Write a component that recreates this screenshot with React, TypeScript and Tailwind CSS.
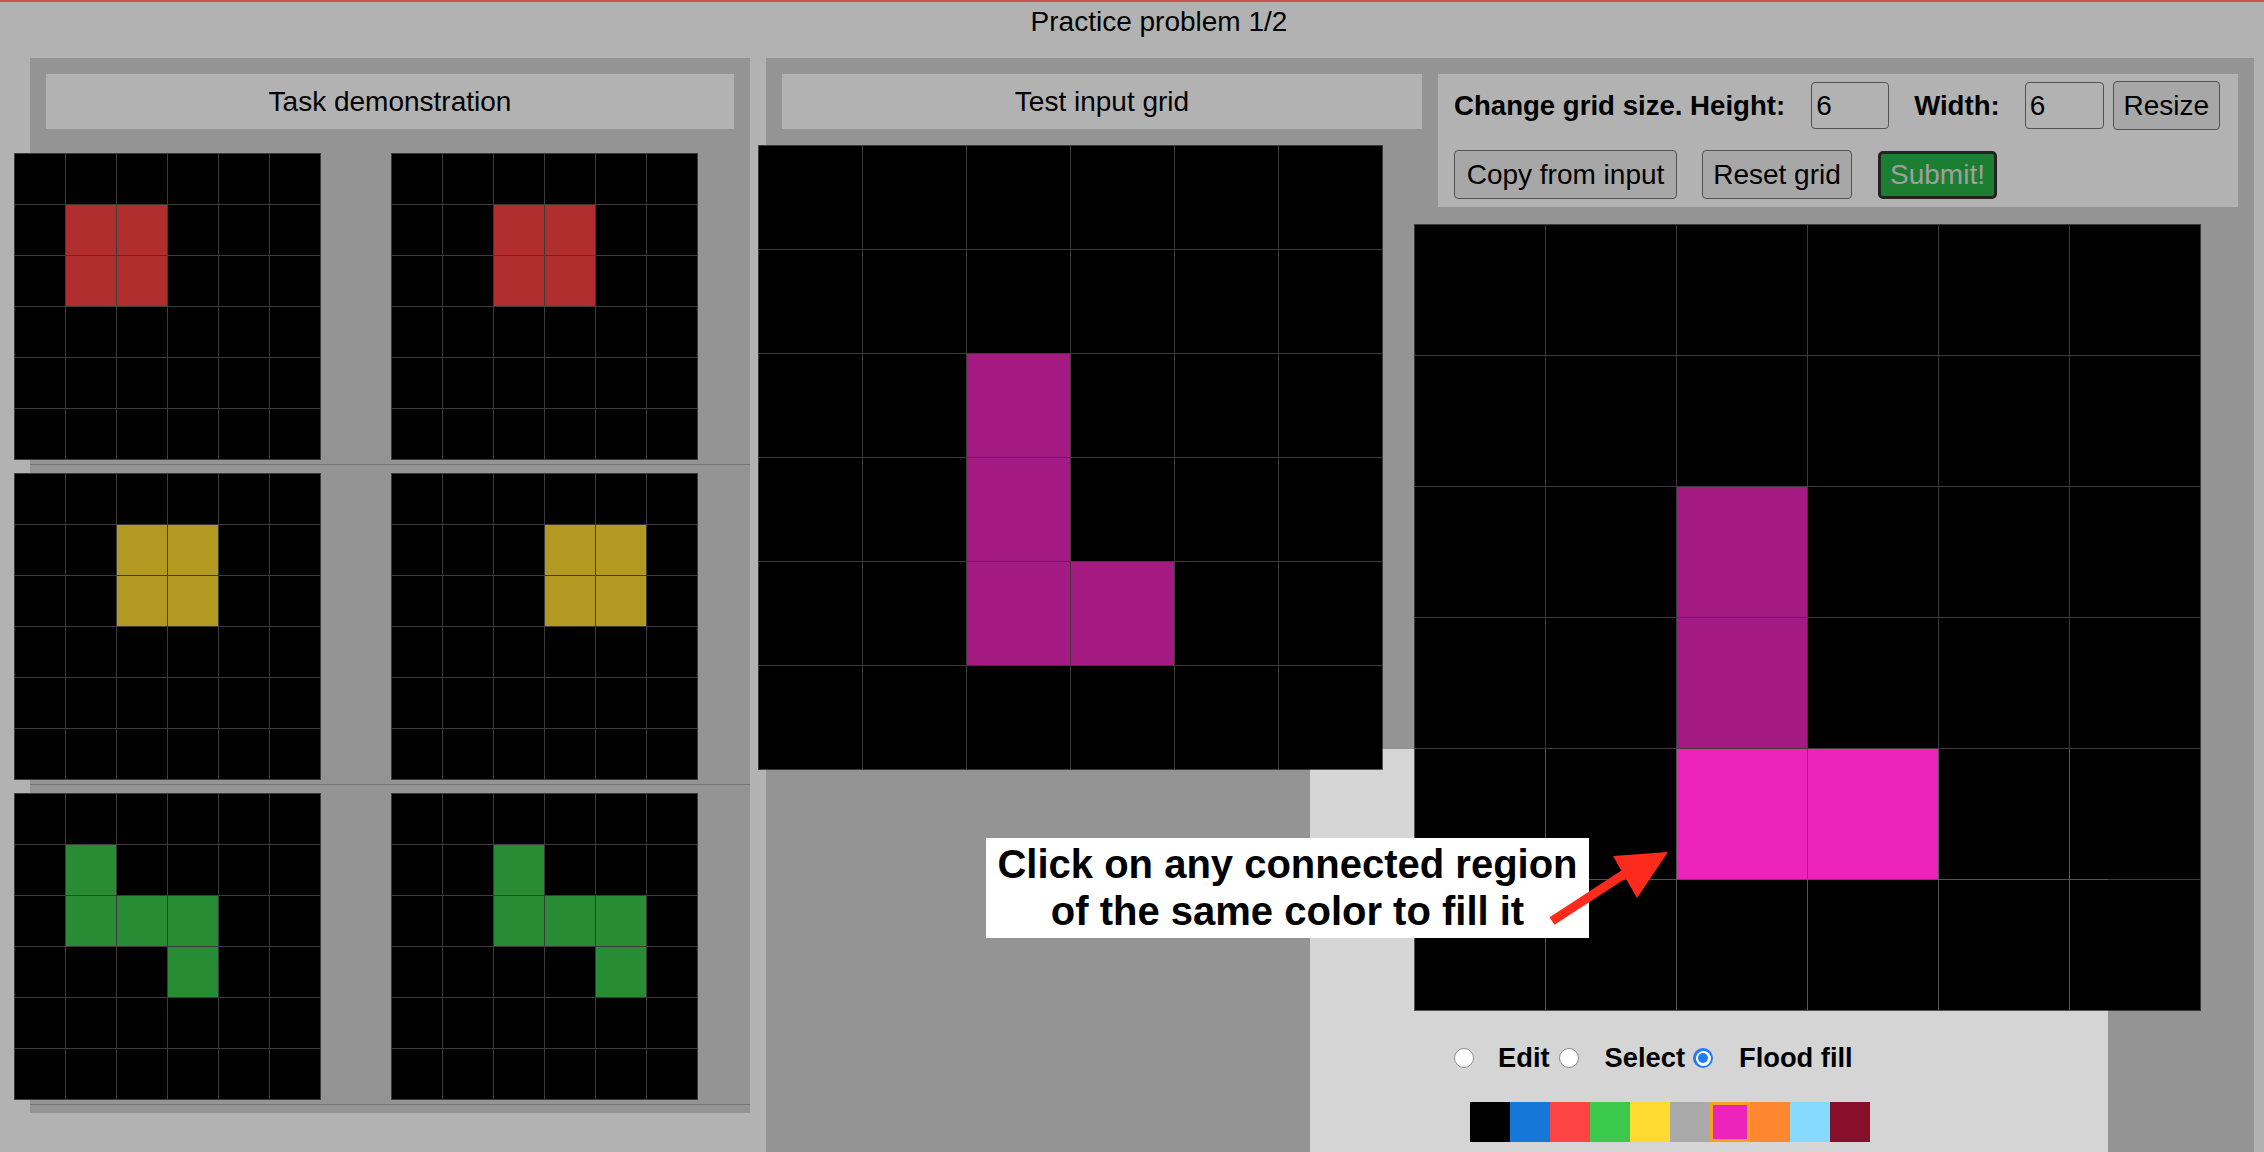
import React from 'react';

// ARC palette, index -> bg class
const bgClass = [
  'bg-[#000000]',
  'bg-[#1577d8]',
  'bg-[#fc4442]',
  'bg-[#3ac94b]',
  'bg-[#fedb31]',
  'bg-[#aaaaaa]',
  'bg-[#ec24bc]',
  'bg-[#fe8730]',
  'bg-[#86dbfc]',
  'bg-[#870f2a]',
];

const makeGrid = (cells: [number, number][], color: number) => {
  const g = Array.from({ length: 6 }, () => Array(6).fill(0));
  cells.forEach(([r, c]) => (g[r][c] = color));
  return g;
};

const demos = [
  [
    makeGrid([[1, 1], [1, 2], [2, 1], [2, 2]], 2),
    makeGrid([[1, 2], [1, 3], [2, 2], [2, 3]], 2),
  ],
  [
    makeGrid([[1, 2], [1, 3], [2, 2], [2, 3]], 4),
    makeGrid([[1, 3], [1, 4], [2, 3], [2, 4]], 4),
  ],
  [
    makeGrid([[1, 1], [2, 1], [2, 2], [2, 3], [3, 3]], 3),
    makeGrid([[1, 2], [2, 2], [2, 3], [2, 4], [3, 4]], 3),
  ],
];

const testInput = makeGrid([[2, 2], [3, 2], [4, 2], [4, 3]], 6);

interface GridProps {
  data: number[][];
  cell: string;
  className?: string;
}

const Grid = ({ data, cell, className = '' }: GridProps) => (
  <div className={`grid grid-cols-6 gap-px bg-[#555555] p-px shrink-0 ${className}`}>
    {data.flat().map((v, i) => (
      <div key={i} className={`${cell} ${bgClass[v]}`} />
    ))}
  </div>
);

const Radio = ({ checked = false, className = '' }: { checked?: boolean; className?: string }) =>
  checked ? (
    <span className={`shrink-0 w-[20px] h-[20px] rounded-full bg-[#1f7cf5] flex items-center justify-center ${className}`}>
      <span className="w-[15px] h-[15px] rounded-full bg-white flex items-center justify-center">
        <span className="w-[10px] h-[10px] rounded-full bg-[#1f7cf5]" />
      </span>
    </span>
  ) : (
    <span className={`block shrink-0 w-[20px] h-[20px] rounded-full border border-[#8d8d8d] bg-white ${className}`} />
  );

export default function App() {
  const btn =
    'shrink-0 whitespace-nowrap h-[49px] bg-[#efefef] border border-[#767676] rounded-[4px] text-[28px] text-black flex items-center justify-center';
  const input =
    'shrink-0 h-[47px] bg-white border border-[#767676] rounded-[4px] text-[28px] pl-[4px] flex items-center';

  return (
    <div className="relative w-[2264px] h-[1152px] overflow-hidden bg-white border-t-2 border-[#c75353] text-black font-['Liberation_Sans',Arial,sans-serif]">
      {/* Title */}
      <div className="h-[56px] flex justify-center pl-[54px] pt-[4px] text-[28px] leading-[32px]">
        Practice problem 1/2
      </div>

      <div className="flex items-start pl-[30px]">
        {/* Task demonstration */}
        <div className="w-[720px] bg-[#d5d5d5] pt-[16px]">
          <div className="mx-[16px] h-[55px] bg-white flex items-center justify-center text-[28px]">
            Task demonstration
          </div>
          <div className="mt-[24px]">
            {demos.map((pair, i) => (
              <div key={i} className="border-b border-[#a8a8a8] pb-[4px] mb-[8px]">
                <div className="flex gap-[70px] ml-[-16px]">
                  <Grid data={pair[0]} cell="w-[50px] h-[50px]" />
                  <Grid data={pair[1]} cell="w-[50px] h-[50px]" />
                </div>
              </div>
            ))}
          </div>
        </div>

        {/* Test area */}
        <div className="ml-[16px] w-[1488px] h-[1200px] bg-[#d5d5d5] p-[16px] flex items-start gap-[16px]">
          <div className="w-[640px]">
            <div className="h-[55px] bg-white flex items-center justify-center text-[28px]">
              Test input grid
            </div>
            <Grid data={testInput} cell="w-[103px] h-[103px]" className="mt-[16px] ml-[-24px] w-[625px]" />
          </div>

          <div className="w-[800px]">
            <div className="h-[133px] bg-white px-[16px] pt-[8px]">
              <div className="flex items-center h-[47px] whitespace-nowrap">
                <span className="shrink-0 font-bold text-[27.6px]">Change grid size. Height:</span>
                <div className={`${input} ml-[26px] w-[78px]`}>6</div>
                <span className="shrink-0 ml-[25px] font-bold text-[27.6px]">Width:</span>
                <div className={`${input} ml-[25px] w-[79px]`}>6</div>
                <button className={`${btn} ml-[9px] w-[107px] h-[47px]`}>Resize</button>
              </div>
              <div className="flex items-center mt-[21px]">
                <button className={`${btn} w-[223px]`}>Copy from input</button>
                <button className={`${btn} ml-[25px] w-[150px]`}>Reset grid</button>
                <button className="shrink-0 ml-[26px] w-[119px] h-[48px] bg-[#27b547] border-[3px] border-[#333333] rounded-[5px] text-[28px] text-[#e4e4e4] flex items-center justify-center">
                  Submit!
                </button>
              </div>
            </div>

            <Grid data={testInput} cell="w-[130px] h-[130px]" className="mt-[17px] ml-[-24px] w-[787px]" />

            <div className="mt-[27px] ml-[16px] h-[40px] flex items-center font-bold text-[27.3px] whitespace-nowrap">
              <Radio />
              <span className="ml-[24px]">Edit</span>
              <Radio className="ml-[9px]" />
              <span className="ml-[26px]">Select</span>
              <Radio checked className="ml-[8px]" />
              <span className="ml-[26px]">Flood fill</span>
            </div>

            <div className="mt-[24px] ml-[32px] flex">
              {bgClass.map((c, i) => (
                <div
                  key={i}
                  className={`w-[40px] h-[40px] ${c} ${i === 6 ? 'border-[3px] border-[#f7a023]' : ''}`}
                />
              ))}
            </div>
          </div>
        </div>
      </div>

      {/* Tutorial spotlight */}
      <div className="absolute left-[1310px] top-[747px] w-[798px] h-[600px] shadow-[0_0_0_4000px_rgba(0,0,0,0.3)] pointer-events-none z-10" />

      <div className="absolute left-[986px] top-[836px] w-[603px] bg-white z-20 pt-[3px] pb-[3px] text-center font-bold text-[40px] leading-[47px] whitespace-nowrap">
        Click on any connected region
        <br />
        of the same color to fill it
      </div>

      <svg className="absolute left-[1540px] top-[840px] z-30" width="140" height="90" viewBox="0 0 140 90">
        <line x1="12" y1="79" x2="92" y2="27" stroke="#fe2a1c" strokeWidth="9" />
        <polygon points="128,10 73,14 97,56" fill="#fe2a1c" />
      </svg>
    </div>
  );
}
